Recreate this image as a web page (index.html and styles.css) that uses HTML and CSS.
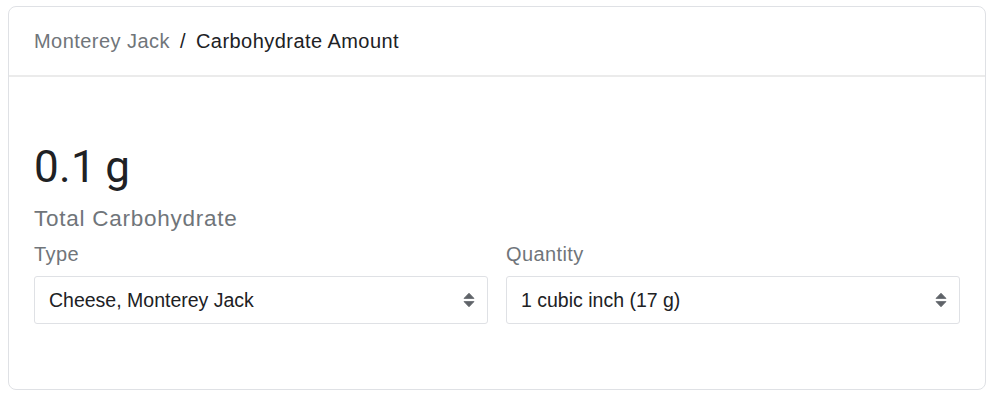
FILE: index.html
```html
<!DOCTYPE html>
<html lang="en">
<head>
<meta charset="utf-8">
<title>Carbohydrate Amount</title>
<link rel="stylesheet" href="styles.css">
</head>
<body>
<div class="card">
  <div class="card-header">
    <span class="crumb-parent">Monterey Jack</span>
    <span class="crumb-sep">/</span>
    <span class="crumb-current">Carbohydrate Amount</span>
  </div>
  <div class="card-body">
    <div class="value">0.1&#8201;g</div>
    <div class="value-label">Total Carbohydrate</div>
    <div class="fields">
      <div class="field">
        <div class="field-label">Type</div>
        <div class="select">
          <span class="select-text">Cheese, Monterey Jack</span>
          <svg class="select-arrows" width="12" height="16" viewBox="0 0 12 16" aria-hidden="true">
            <path d="M6 1.2 L11 6.4 L1 6.4 Z" fill="#5f6368" stroke="#5f6368" stroke-width="0.8" stroke-linejoin="round"/>
            <path d="M6 14.8 L11 9.6 L1 9.6 Z" fill="#5f6368" stroke="#5f6368" stroke-width="0.8" stroke-linejoin="round"/>
          </svg>
        </div>
      </div>
      <div class="field">
        <div class="field-label">Quantity</div>
        <div class="select">
          <span class="select-text">1 cubic inch (17 g)</span>
          <svg class="select-arrows" width="12" height="16" viewBox="0 0 12 16" aria-hidden="true">
            <path d="M6 1.2 L11 6.4 L1 6.4 Z" fill="#5f6368" stroke="#5f6368" stroke-width="0.8" stroke-linejoin="round"/>
            <path d="M6 14.8 L11 9.6 L1 9.6 Z" fill="#5f6368" stroke="#5f6368" stroke-width="0.8" stroke-linejoin="round"/>
          </svg>
        </div>
      </div>
    </div>
  </div>
</div>
</body>
</html>
```

FILE: styles.css
```css
html, body {
  background: #ffffff;
}

body {
  margin: 6px 8px;
  font-family: "Liberation Sans", Arial, sans-serif;
  color: #202124;
}

.card {
  box-sizing: border-box;
  width: 978px;
  border: 1px solid #dfe1e5;
  border-radius: 8px;
  background: #fff;
}

.card-header {
  padding: 22px 25px;
  font-size: 20px;
  line-height: 24px;
  letter-spacing: 0.45px;
  border-bottom: 2px solid #ebebeb;
  white-space: nowrap;
}

.crumb-parent {
  color: #70757a;
}

.crumb-sep {
  color: #202124;
  margin: 0 4px;
}

.crumb-current {
  color: #202124;
}

.card-body {
  padding: 64px 25px 65px;
}

.value {
  font-family: Roboto, "Liberation Sans", sans-serif;
  font-size: 44px;
  line-height: 52px;
  letter-spacing: 0.3px;
  color: #202124;
}

.value-label {
  margin-top: 12px;
  font-size: 22.5px;
  line-height: 28px;
  letter-spacing: 0.75px;
  color: #70757a;
}

.fields {
  margin-top: 9px;
  display: grid;
  grid-template-columns: 1fr 1fr;
  column-gap: 18px;
}

.field-label {
  font-size: 20px;
  line-height: 24px;
  letter-spacing: 0.4px;
  color: #70757a;
  margin-bottom: 10px;
}

.select {
  box-sizing: border-box;
  height: 48px;
  border: 1px solid #dfe1e5;
  border-radius: 3px;
  padding: 0 12px 0 14px;
  display: flex;
  align-items: center;
  justify-content: space-between;
}

.select-text {
  font-size: 19.5px;
  color: #202124;
}

.select-arrows {
  display: block;
}
```
